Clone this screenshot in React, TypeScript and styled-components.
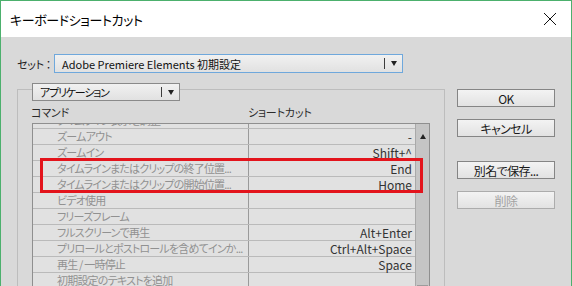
import styled, { createGlobalStyle } from "styled-components";

const GlobalStyle = createGlobalStyle`
  html, body {
    margin: 0;
    padding: 0;
  }
  body {
    width: 572px;
    height: 286px;
    overflow: hidden;
    background: #d9d9d9;
    font-family: "Noto Sans CJK JP", sans-serif;
    font-feature-settings: "palt" 1;
  }
`;

const Window = styled.div`
  width: 572px;
  height: 286px;
  box-sizing: border-box;
  border: 1px solid #4cb06d;
  border-bottom: none;
  background: #d9d9d9;
  display: flex;
  flex-direction: column;
  overflow: hidden;
`;

const TitleBar = styled.div`
  height: 36px;
  flex: none;
  background: #ffffff;
  display: flex;
  align-items: center;
  justify-content: space-between;
  padding: 0 14px 0 9px;
`;

const Title = styled.div`
  font-size: 13px;
  letter-spacing: -0.4px;
  color: #000;
`;

const Body = styled.div`
  padding: 17px 0 0 16px;
  display: flex;
  flex-direction: column;
`;

const SetRow = styled.div`
  display: flex;
  align-items: center;
  height: 19px;
`;

const Label = styled.div`
  width: 37px;
  font-size: 11px;
  letter-spacing: -0.3px;
  color: #222;
`;

const Dropdown = styled.div<{ $width: number; $height: number; $focus?: boolean }>`
  width: ${(p) => p.$width}px;
  height: ${(p) => p.$height}px;
  box-sizing: border-box;
  border: 1px solid ${(p) => (p.$focus ? "#6fa8dc" : "#8a8a8a")};
  background: linear-gradient(#f1f1f1, #e1e1e1);
  display: flex;
  align-items: center;
  flex: none;
`;

const DropText = styled.div<{ $spacing?: number }>`
  flex: 1;
  font-size: 11px;
  letter-spacing: ${(p) => p.$spacing ?? 0}px;
  color: #111;
  padding-left: 7px;
  white-space: nowrap;
`;

const DropArrow = styled.div`
  width: 18px;
  height: 100%;
  display: flex;
  align-items: center;
  justify-content: center;
  position: relative;
  &::before {
    content: "";
    position: absolute;
    left: 0;
    top: 3px;
    bottom: 3px;
    width: 1px;
    background: #3c3c3c;
  }
  &::after {
    content: "";
    border-left: 3.5px solid transparent;
    border-right: 3.5px solid transparent;
    border-top: 5px solid #222;
    margin-left: 1px;
  }
`;

const MainRow = styled.div`
  display: flex;
  align-items: flex-start;
  margin-top: 16px;
`;

const GroupBox = styled.div`
  width: 428px;
  height: 210px;
  box-sizing: border-box;
  border: 1px solid #bdbdbd;
  padding-left: 14px;
  flex: none;
`;

const AppDropWrap = styled.div`
  margin-top: -7px;
`;

const HeaderRow = styled.div`
  height: 22px;
  display: flex;
  align-items: center;
  margin-left: -1px;
  font-size: 11px;
  letter-spacing: -0.2px;
  color: #2a2a2a;
`;

const HeaderCell = styled.div<{ $width?: number }>`
  width: ${(p) => (p.$width ? `${p.$width}px` : "auto")};
`;

const Table = styled.div`
  position: relative;
  width: 398px;
  height: 170px;
  box-sizing: border-box;
  border: 1px solid #8f8f8f;
  background: #e1e1e1;
  display: flex;
  overflow: hidden;
`;

const List = styled.div`
  width: 383px;
  margin-top: -11px;
`;

const Row = styled.div`
  display: flex;
  height: 16px;
  box-sizing: border-box;
  border-bottom: 1px solid #bababa;
`;

const CommandCell = styled.div`
  width: 216px;
  flex: none;
  box-sizing: border-box;
  border-right: 1px solid #9a9a9a;
  padding-left: 24px;
  font-size: 11px;
  letter-spacing: -0.8px;
  line-height: 15px;
  color: #919191;
  white-space: nowrap;
  overflow: hidden;
`;

const KeyCell = styled.div`
  flex: 1;
  text-align: right;
  padding-right: 3px;
  font-size: 12px;
  line-height: 15px;
  color: #333;
  white-space: nowrap;
`;

const ScrollBar = styled.div`
  width: 13px;
  flex: none;
  background: #c5c5c5;
  border-left: 1px solid #a9a9a9;
  display: flex;
  flex-direction: column;
  justify-content: space-between;
`;

const ScrollUp = styled.div`
  height: 15px;
  display: flex;
  justify-content: center;
  padding-top: 4px;
  box-sizing: border-box;
  &::after {
    content: "";
    border-left: 3.5px solid transparent;
    border-right: 3.5px solid transparent;
    border-bottom: 5px solid #222;
  }
`;

const ScrollThumb = styled.div`
  height: 6px;
  margin: 0 1px;
  background: #e6e6e6;
  border: 1px solid #9c9c9c;
  border-bottom: none;
`;

const Highlight = styled.div`
  position: absolute;
  left: 7px;
  top: 34px;
  width: 383px;
  height: 35px;
  box-sizing: border-box;
  border: 3px solid #e3141c;
  pointer-events: none;
`;

const Buttons = styled.div`
  display: flex;
  flex-direction: column;
  margin-left: 12px;
`;

const Button = styled.div<{ $gap?: number; $disabled?: boolean }>`
  width: 98px;
  height: 18px;
  box-sizing: border-box;
  margin-top: ${(p) => p.$gap ?? 0}px;
  border: 1px solid ${(p) => (p.$disabled ? "#acacac" : "#858585")};
  background: linear-gradient(#f3f3f3, #e2e2e2);
  display: flex;
  align-items: center;
  justify-content: center;
  font-size: 12px;
  letter-spacing: -0.6px;
  color: ${(p) => (p.$disabled ? "#a2a2a2" : "#1a1a1a")};
`;

const rows: [string, string][] = [
  ["タイムライン表示を調整", ""],
  ["ズームアウト", "-"],
  ["ズームイン", "Shift+^"],
  ["タイムラインまたはクリップの終了位置...", "End"],
  ["タイムラインまたはクリップの開始位置...", "Home"],
  ["ビデオ使用", ""],
  ["フリーズフレーム", ""],
  ["フルスクリーンで再生", "Alt+Enter"],
  ["プリロールとポストロールを含めてインか...", "Ctrl+Alt+Space"],
  ["再生 / 一時停止", "Space"],
  ["初期設定のテキストを追加", ""],
];

export default function App() {
  return (
    <>
      <GlobalStyle />
      <Window>
        <TitleBar>
          <Title>キーボードショートカット</Title>
          <svg width="14" height="14" viewBox="0 0 14 14">
            <path d="M1 1 L13 13 M13 1 L1 13" stroke="#111" strokeWidth="1" />
          </svg>
        </TitleBar>
        <Body>
          <SetRow>
            <Label>セット ：</Label>
            <Dropdown $width={349} $height={19} $focus>
              <DropText>Adobe Premiere Elements 初期設定</DropText>
              <DropArrow />
            </Dropdown>
          </SetRow>
          <MainRow>
            <GroupBox>
              <AppDropWrap>
                <Dropdown $width={148} $height={18}>
                  <DropText $spacing={-1.2}>アプリケーション</DropText>
                  <DropArrow />
                </Dropdown>
              </AppDropWrap>
              <HeaderRow>
                <HeaderCell $width={217}>コマンド</HeaderCell>
                <HeaderCell>ショートカット</HeaderCell>
              </HeaderRow>
              <Table>
                <List>
                  {rows.map(([cmd, key], i) => (
                    <Row key={i}>
                      <CommandCell>{cmd}</CommandCell>
                      <KeyCell>{key}</KeyCell>
                    </Row>
                  ))}
                </List>
                <ScrollBar>
                  <ScrollUp />
                  <ScrollThumb />
                </ScrollBar>
                <Highlight />
              </Table>
            </GroupBox>
            <Buttons>
              <Button>OK</Button>
              <Button $gap={12}>キャンセル</Button>
              <Button $gap={24}>別名で保存...</Button>
              <Button $gap={12} $disabled>
                削除
              </Button>
            </Buttons>
          </MainRow>
        </Body>
      </Window>
    </>
  );
}
